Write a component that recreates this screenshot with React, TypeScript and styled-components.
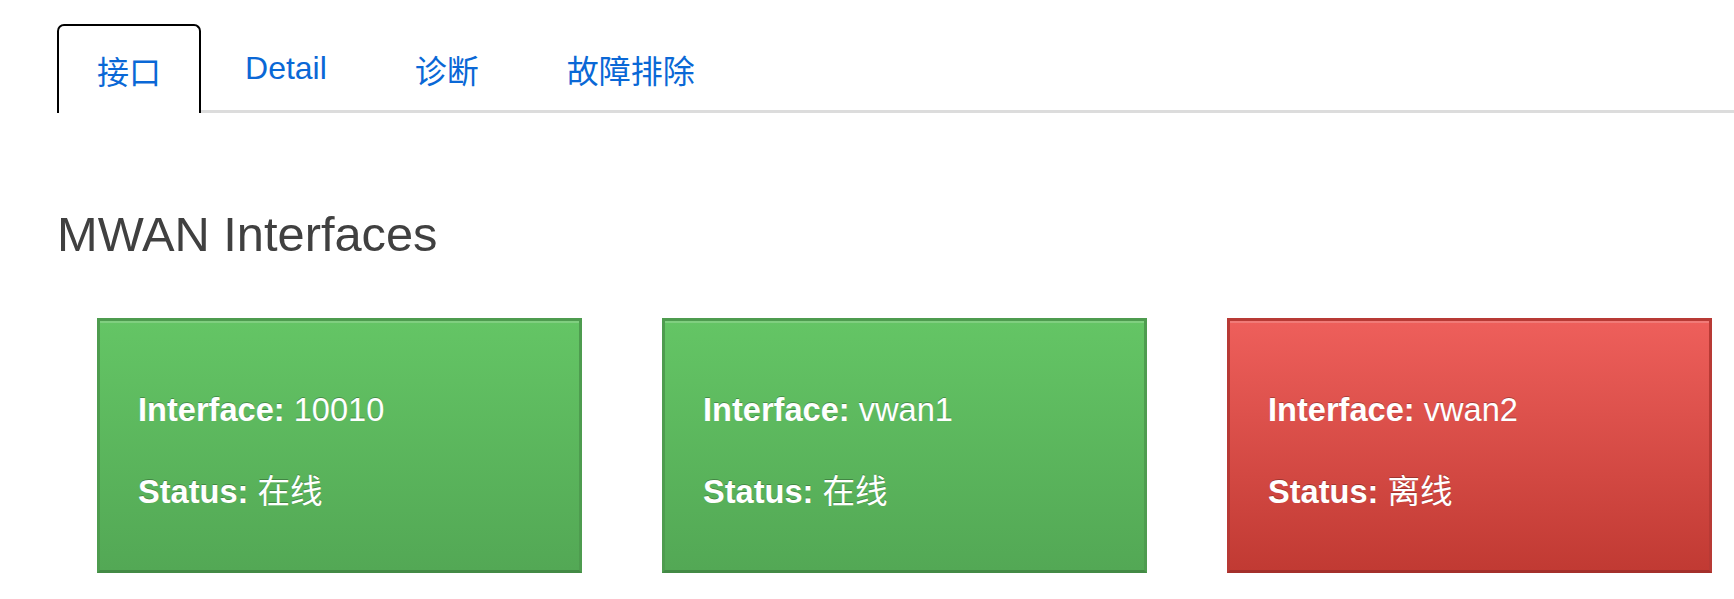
import React, {useState} from "react";
import styled, {createGlobalStyle, css} from "styled-components";

const GlobalStyle = createGlobalStyle`
    html, body {
        margin: 0;
        padding: 0;
        background: #fff;
        font-family: "Liberation Sans", Arial, "Noto Sans CJK SC", sans-serif;
    }
`

type Iface = {
    name: string
    online: boolean
}

const interfaces: Iface[] = [
    {name: "10010", online: true},
    {name: "vwan1", online: true},
    {name: "vwan2", online: false},
]

const tabs = ["接口", "Detail", "诊断", "故障排除"]

export default function App() {
    const [active, setActive] = useState(0)

    return (
        <Page>
            <GlobalStyle/>
            <TabBar>
                {tabs.map((t, i) => (
                    <Tab key={t} $active={i === active} onClick={() => setActive(i)}>{t}</Tab>
                ))}
            </TabBar>
            <Heading>MWAN Interfaces</Heading>
            <CardRow>
                {interfaces.map(item => (
                    <StatusCard key={item.name} $online={item.online}>
                        <Line><b>Interface:</b> {item.name}</Line>
                        <Line><b>Status:</b> {item.online ? "在线" : "离线"}</Line>
                    </StatusCard>
                ))}
            </CardRow>
        </Page>
    )
}

const Page = styled.div`
    padding: 24px 0 0 57px;
    overflow: hidden;
`

const TabBar = styled.ul`
    display: flex;
    flex-direction: row;
    list-style: none;
    margin: 0;
    padding: 0;
    height: 86px;
    border-bottom: 3px solid #dcdcdc;
`

const Tab = styled.li<{ $active: boolean }>`
    display: flex;
    align-items: center;
    box-sizing: border-box;
    height: 89px;
    margin-bottom: -3px;
    padding: 0 44px;
    font-size: 32px;
    color: #0a68d6;
    cursor: pointer;
    background: transparent;

    ${props => props.$active && css`
        padding: 0 38px;
        background: #fff;
        border: 2px solid #000;
        border-bottom: none;
        border-radius: 7px 7px 0 0;
    `}
`

const Heading = styled.h2`
    margin: 94px 0 0 0;
    font-size: 48.8px;
    font-weight: normal;
    line-height: 55px;
    color: #404040;
`

const CardRow = styled.div`
    display: flex;
    flex-direction: row;
    gap: 80px;
    margin-top: 56px;
    padding-left: 40px;
    width: max-content;
`

const StatusCard = styled.div<{ $online: boolean }>`
    display: flex;
    flex-direction: column;
    gap: 42px;
    box-sizing: border-box;
    width: 485px;
    height: 255px;
    padding: 69px 38px 0 38px;
    border: 3px solid;
    color: #fff;
    text-shadow: 0 -1px 0 rgba(0, 0, 0, 0.25);
    box-shadow: inset 0 2px 0 rgba(255, 255, 255, 0.18);
    background-image: ${props => props.$online
        ? "linear-gradient(to bottom, #64c565, #53a855)"
        : "linear-gradient(to bottom, #ee5f5b, #c13a33)"};
    border-color: ${props => props.$online
        ? "#4e9c4f #4e9c4f #438a45"
        : "#b83a35 #b83a35 #a4302b"};
`

const Line = styled.div`
    font-size: 32.6px;
    line-height: 40px;

    & > b {
        font-weight: bold;
    }
`
